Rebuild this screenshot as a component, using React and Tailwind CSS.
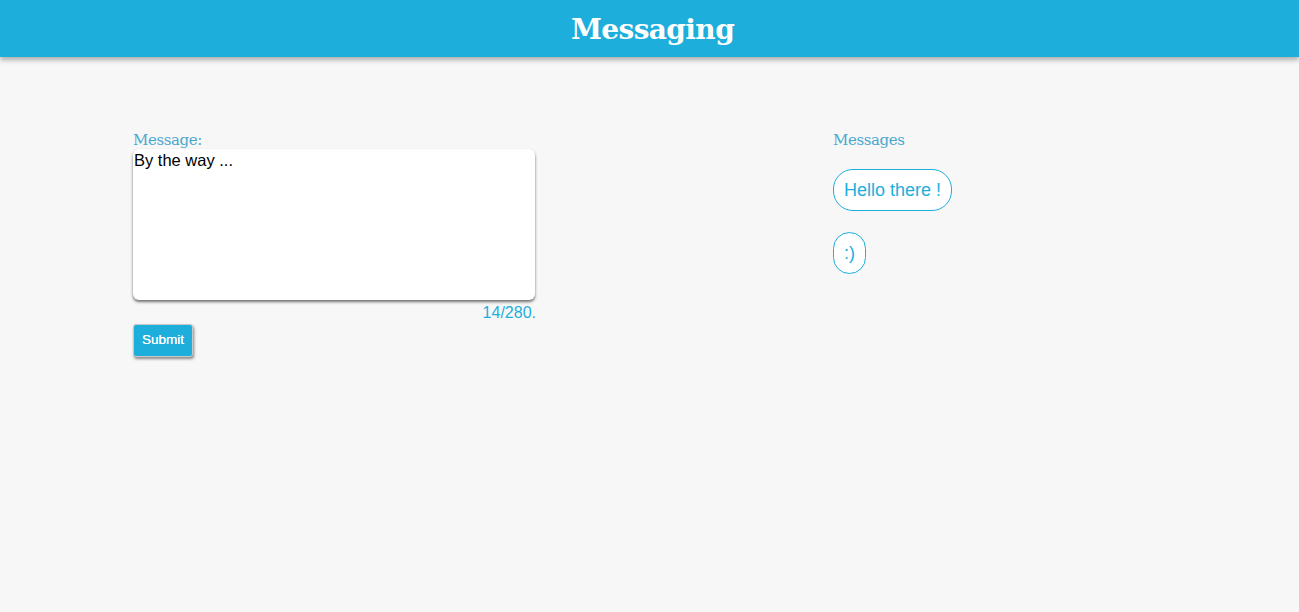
export default function App() {
  const text = "By the way ...";
  const messages = ["Hello there !", ":)"];

  return (
    <div className="min-h-screen bg-[#f7f7f7] font-['Liberation_Sans',Arial,sans-serif]">
      <header className="h-[57px] bg-[#1eaedb] flex items-center justify-center shadow-[0_3px_5px_rgba(0,0,0,0.3)]">
        <h1 className="text-white text-[28px] font-bold font-['DejaVu_Serif',serif] tracking-[-0.6px] leading-none pt-[2px] pl-[6px]">
          Messaging
        </h1>
      </header>

      <main className="mx-[133px] pt-[74px] flex">
        {/* Form */}
        <div className="w-[700px] shrink-0">
          <div className="w-[402px]">
            <label className="block text-[15px] leading-[18px] text-[#4aa8cf] font-['DejaVu_Serif',serif] tracking-[-0.4px]">
              Message:
            </label>
            <textarea
              defaultValue={text}
              spellCheck={false}
              className="block w-[402px] h-[151px] bg-white rounded-[6px] resize-none outline-none px-[1px] pt-[1px] text-[16.5px] leading-[20px] text-black shadow-[0_2px_3px_rgba(0,0,0,0.55)]"
            />
            <div className="text-right text-[16px] leading-[22px] text-[#1eaedb] mt-[2px] mr-[-1px]">
              {text.length}/280.
            </div>
            <button className="block mt-0 w-[60px] h-[33px] bg-[#1eaedb] text-white text-[13.5px] font-normal rounded-[3px] border border-[#c9c9c9] shadow-[1px_2px_3px_rgba(0,0,0,0.45)] [text-shadow:0_0_0.4px_#fff]">
              Submit
            </button>
          </div>
        </div>

        {/* Messages */}
        <div>
          <div className="text-[15px] leading-[18px] text-[#4aa8cf] font-['DejaVu_Serif',serif] tracking-[-0.4px]">
            Messages
          </div>
          <div className="mt-[20px] flex flex-col items-start gap-[21px]">
            {messages.map((m, i) => (
              <div
                key={i}
                className="h-[42px] flex items-center px-[10px] rounded-[20px] border border-[#1eaedb] bg-white text-[18px] text-[#1eaedb]"
              >
                {m}
              </div>
            ))}
          </div>
        </div>
      </main>
    </div>
  );
}
